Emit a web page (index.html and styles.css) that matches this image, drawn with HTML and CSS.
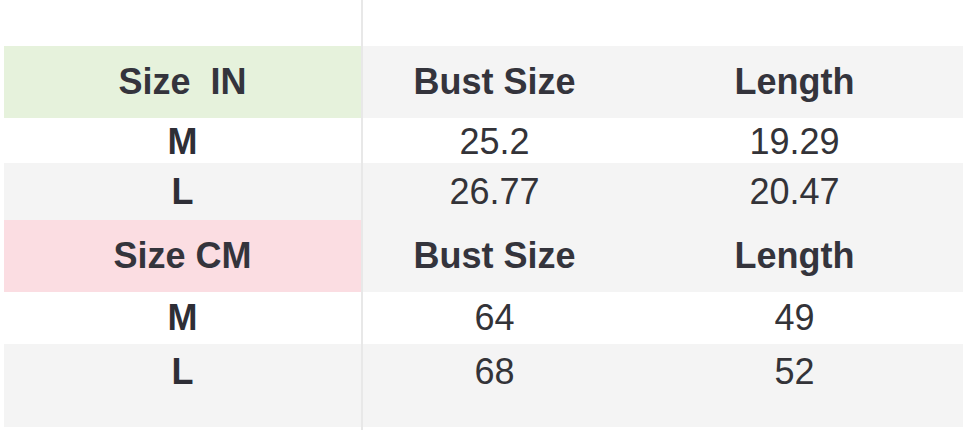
FILE: index.html
```html
<!DOCTYPE html>
<html>
<head>
<meta charset="utf-8">
<link rel="stylesheet" href="styles.css">
</head>
<body>
<div class="chart">
  <div class="sep"></div>
  <div class="spacer top"></div>

  <div class="cell head green">Size&nbsp;&nbsp;IN</div>
  <div class="cell head gray">Bust Size</div>
  <div class="cell head gray">Length</div>

  <div class="cell label white r45">M</div>
  <div class="cell white r45">25.2</div>
  <div class="cell white r45">19.29</div>

  <div class="cell label gray r57">L</div>
  <div class="cell gray r57">26.77</div>
  <div class="cell gray r57">20.47</div>

  <div class="cell head pink">Size CM</div>
  <div class="cell head gray">Bust Size</div>
  <div class="cell head gray">Length</div>

  <div class="cell label white r52">M</div>
  <div class="cell white r52">64</div>
  <div class="cell white r52">49</div>

  <div class="cell label gray last">L</div>
  <div class="cell gray last">68</div>
  <div class="cell gray last">52</div>

  <div class="spacer bottom"></div>
</div>
</body>
</html>
```

FILE: styles.css
```css
html, body {
  margin: 0;
  padding: 0;
  background: #ffffff;
}

.chart {
  width: 968px;
  height: 431px;
  box-sizing: border-box;
  padding-left: 4px;
  display: grid;
  grid-template-columns: 357px 2px 263px 337px;
  grid-template-rows: 46px 72px 45px 57px 72px 52px 83px 3px;
  font-family: "Liberation Sans", Arial, sans-serif;
  font-size: 36px;
  color: #333338;
}

.sep {
  grid-column: 2;
  grid-row: 1 / -1;
  background: #e8e8e8;
}

.spacer {
  grid-column: 1 / -1;
}
.spacer.top { grid-row: 1; }
.spacer.bottom { grid-row: 8; }

.cell {
  display: flex;
  align-items: center;
  justify-content: center;
  line-height: 1;
  white-space: nowrap;
}

.cell:nth-of-type(3n+1) { grid-column: 3; }
.cell:nth-of-type(3n+2) { grid-column: 4; }
.cell:nth-of-type(3n) { grid-column: 1; }

.head {
  font-weight: bold;
  color: #34343c;
}

.label {
  font-weight: bold;
  color: #2e2e36;
}

.green { background: #e6f2dc; }
.pink { background: #fbdde2; }
.gray { background: #f4f4f4; }
.white { background: #ffffff; }

.cell.r45 { padding-top: 3px; }
.cell.last {
  align-items: flex-start;
  padding-top: 10px;
}
```
